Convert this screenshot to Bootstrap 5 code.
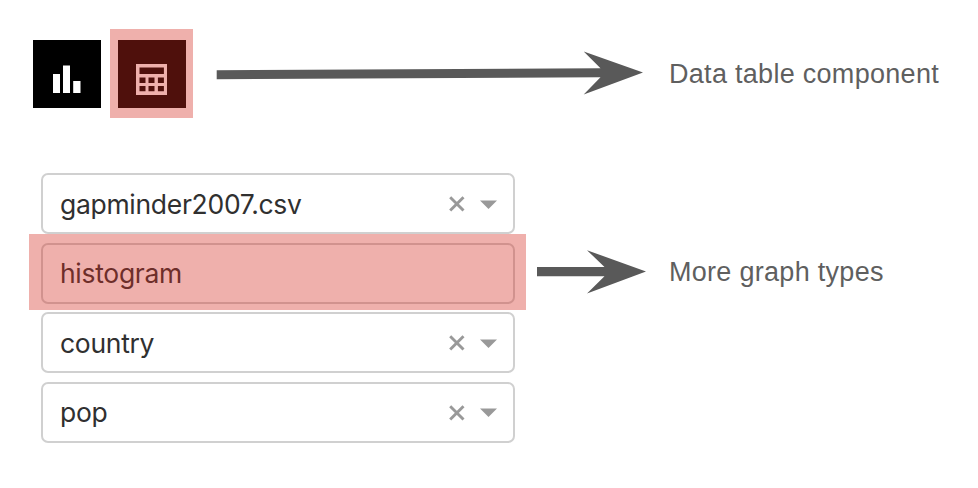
<!DOCTYPE html>
<html lang="en">
<head>
<meta charset="utf-8">
<meta name="viewport" content="width=device-width, initial-scale=1">
<title>Component overview</title>
<link href="https://cdn.jsdelivr.net/npm/bootstrap@5.3.0/dist/css/bootstrap.min.css" rel="stylesheet">
<style>
body { background: #fff; width: 978px; height: 488px; overflow: hidden; }
svg { display: block; flex: none; }
.tool-row { height: 89px; margin-top: 29px; padding-left: 33px; }
.tool { width: 68px; height: 68px; background: #000; border: 0; flex: none; }
.tool-wrap { width: 83px; height: 89px; margin-left: 9px; padding-left: 7.5px; }
.tint { position: absolute; inset: 0; background: rgba(212, 44, 32, .373); pointer-events: none; }
.note { font: 27px/32px "Liberation Sans", Arial, sans-serif; letter-spacing: .29px; color: #5f5f5f; white-space: nowrap; margin-left: 23px; }
.arrow-long { margin-left: 23px; }
.form-area { margin-top: 55px; }
.fields { width: 497px; margin-left: 29px; }
.field-wrap { padding: 0 11px 0 12px; height: 61px; margin-bottom: 8.5px; }
.field-box { height: 61px; border: 2px solid #d0d0d0; border-radius: 7px; padding: 0 16px 0 17px; font: 400 26.5px/58px Inter, "Liberation Sans", sans-serif; letter-spacing: -.3px; color: #303030; }
.picked { margin: -8.5px 0 2px; padding-top: 8.5px; height: 76px; }
.controls { gap: 15px; padding-top: 1px; }
.arrow-short { margin: 77px 0 0 11px; }
.graph-note { margin-top: 83px; }
</style>
</head>
<body>
<div class="tool-row d-flex align-items-center">
  <button class="tool p-0" aria-label="Chart">
    <svg width="68" height="68" fill="#fff"><path d="M20 34h7v19h-7zM30 25.5h7V53h-7zM40.2 41h7.3v12h-7.3z"/></svg>
  </button>
  <div class="tool-wrap position-relative d-flex align-items-center">
    <button class="tool p-0" aria-label="Table">
      <svg width="68" height="68" viewBox=".7 0 68 68" fill="#fff" fill-rule="evenodd"><path d="M18.7 24h31v31h-31zM22.2 27.5V34h24.4v-6.5zM22.2 37.5V43h6v-5.5zM31.2 37.5V43h6v-5.5zM40.6 37.5V43h6v-5.5zM22.2 46v5.3h6V46zM31.2 46v5.3h6V46zM40.6 46v5.3h6V46z"/></svg>
    </button>
    <div class="tint"></div>
  </div>
  <svg class="arrow-long" width="430" height="46" viewBox="216 51 430 46" fill="#595959"><path d="M216.7 70.2L600.5 68.2 583.7 51.5 643 72.5 583.7 94.5 600.5 77.3 216.7 79.2z"/></svg>
  <span class="note">Data table component</span>
</div>
<div class="form-area d-flex align-items-start">
  <div class="fields">
    <div class="field-wrap"><div class="field-box d-flex justify-content-between align-items-center"><span>gapminder2007.csv</span>
      <span class="controls d-flex align-items-center"><svg width="16" height="16" stroke="#999" stroke-width="2.9"><path d="M1.2 1.2l13.3 13.3M14.5 1.2L1.2 14.5"/></svg><svg width="17" height="9" fill="#999"><path d="M0 .5h17L8.5 9z"/></svg></span></div></div>
    <div class="field-wrap picked position-relative"><div class="field-box d-flex align-items-center"><span>histogram</span></div><div class="tint"></div></div>
    <div class="field-wrap"><div class="field-box d-flex justify-content-between align-items-center"><span>country</span>
      <span class="controls d-flex align-items-center"><svg width="16" height="16" stroke="#999" stroke-width="2.9"><path d="M1.2 1.2l13.3 13.3M14.5 1.2L1.2 14.5"/></svg><svg width="17" height="9" fill="#999"><path d="M0 .5h17L8.5 9z"/></svg></span></div></div>
    <div class="field-wrap"><div class="field-box d-flex justify-content-between align-items-center"><span>pop</span>
      <span class="controls d-flex align-items-center"><svg width="16" height="16" stroke="#999" stroke-width="2.9"><path d="M1.2 1.2l13.3 13.3M14.5 1.2L1.2 14.5"/></svg><svg width="17" height="9" fill="#999"><path d="M0 .5h17L8.5 9z"/></svg></span></div></div>
  </div>
  <svg class="arrow-short" width="109" height="44" viewBox="537 250 109 44" fill="#595959"><path d="M537 267h67.5L587 250.2l59 21.4-59 21.9 17.5-17.3H537z"/></svg>
  <span class="note graph-note">More graph types</span>
</div>
</body>
</html>
